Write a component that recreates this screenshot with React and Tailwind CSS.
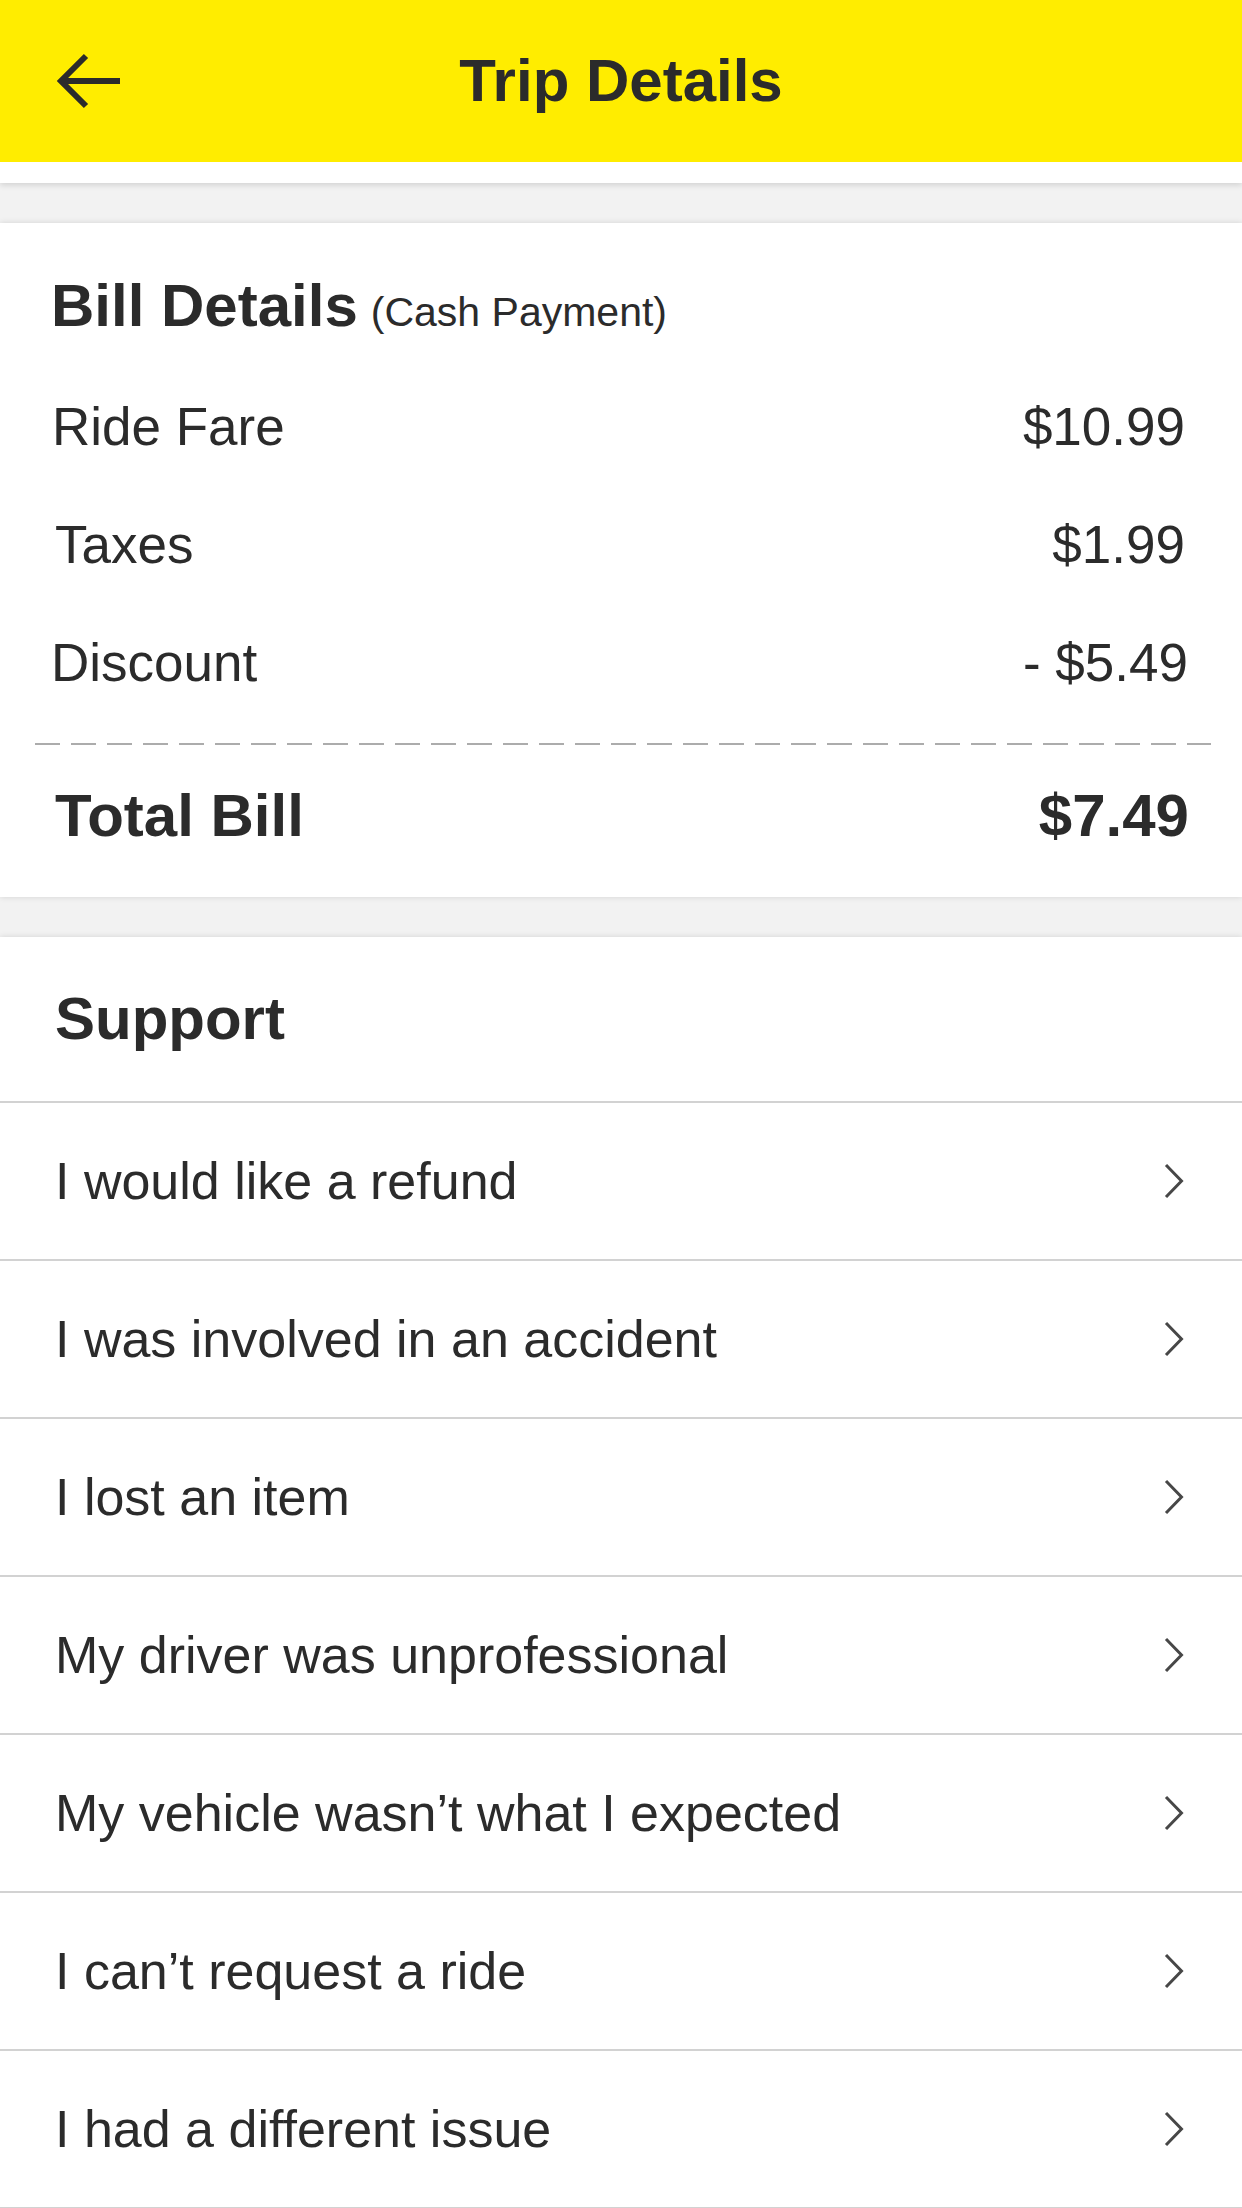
const billRows = [
  { label: 'Ride Fare', amount: '$10.99', pl: 'pl-[52px]', pr: 'pr-[57px]' },
  { label: 'Taxes', amount: '$1.99', pl: 'pl-[55px]', pr: 'pr-[57px]' },
  { label: 'Discount', amount: '- $5.49', pl: 'pl-[51px]', pr: 'pr-[54px]' },
]

const supportItems = [
  'I would like a refund',
  'I was involved in an accident',
  'I lost an item',
  'My driver was unprofessional',
  'My vehicle wasn\u2019t what I expected',
  'I can\u2019t request a ride',
  'I had a different issue',
]

const BackArrow = () => (
  <svg width="66" height="56" viewBox="0 0 66 56" fill="none" stroke="#2b2b2b" strokeWidth="6">
    <path d="M4 28 H64" />
    <path d="M30 3 L5 28 L30 53" strokeLinejoin="miter" />
  </svg>
)

const Chevron = () => (
  <svg width="20" height="36" viewBox="0 0 20 36" fill="none" stroke="#474747" strokeWidth="3">
    <path d="M2 2 L17.5 18 L2 34" />
  </svg>
)

const App = () => {
  return (
    <div className="min-h-[2208px] bg-[#f2f2f2] text-[#2b2b2b] font-['Liberation_Sans',Arial,sans-serif]">
      <div className="bg-white pb-[21px] shadow-[0_2px_6px_rgba(0,0,0,0.14)]">
        <header className="h-[162px] bg-[#ffed00] grid grid-cols-[1fr_auto_1fr] items-center">
          <div className="pl-[56px] flex items-center">
            <BackArrow />
          </div>
          <h1 className="text-[60px] font-bold leading-none">Trip Details</h1>
          <div />
        </header>
      </div>

      <section className="mt-[40px] bg-white pt-[53px] pb-[10px] shadow-[0_0_6px_rgba(0,0,0,0.13)]">
        <div className="h-[60px] pl-[51px] flex items-baseline gap-[13px] leading-[60px]">
          <span className="text-[60px] font-bold">Bill Details</span>
          <span className="text-[41px]">(Cash Payment)</span>
        </div>
        <div className="mt-[32px]">
          {billRows.map((row) => (
            <div key={row.label} className={`h-[118px] flex items-center justify-between text-[53px] ${row.pl} ${row.pr}`}>
              <span>{row.label}</span>
              <span>{row.amount}</span>
            </div>
          ))}
        </div>
        <div className="mt-[21px] ml-[35px] mr-[31px] h-[2px] bg-[repeating-linear-gradient(to_right,#acacac_0,#acacac_25px,transparent_25px,transparent_36px)]" />
        <div className="h-[142px] pl-[55px] pr-[53px] flex items-center justify-between text-[60px] font-bold">
          <span>Total Bill</span>
          <span>$7.49</span>
        </div>
      </section>

      <section className="mt-[40px] bg-white shadow-[0_0_6px_rgba(0,0,0,0.13)]">
        <div className="h-[164px] pl-[55px] flex items-center">
          <h2 className="text-[60px] font-bold">Support</h2>
        </div>
        {supportItems.map((item) => (
          <div key={item} className="h-[158px] border-t-2 border-[#d2d2d2] pl-[55px] pr-[58px] flex items-center justify-between text-[52px]">
            <span>{item}</span>
            <Chevron />
          </div>
        ))}
        <div className="h-[2px] bg-[#d2d2d2]" />
      </section>
    </div>
  )
}

export default App
